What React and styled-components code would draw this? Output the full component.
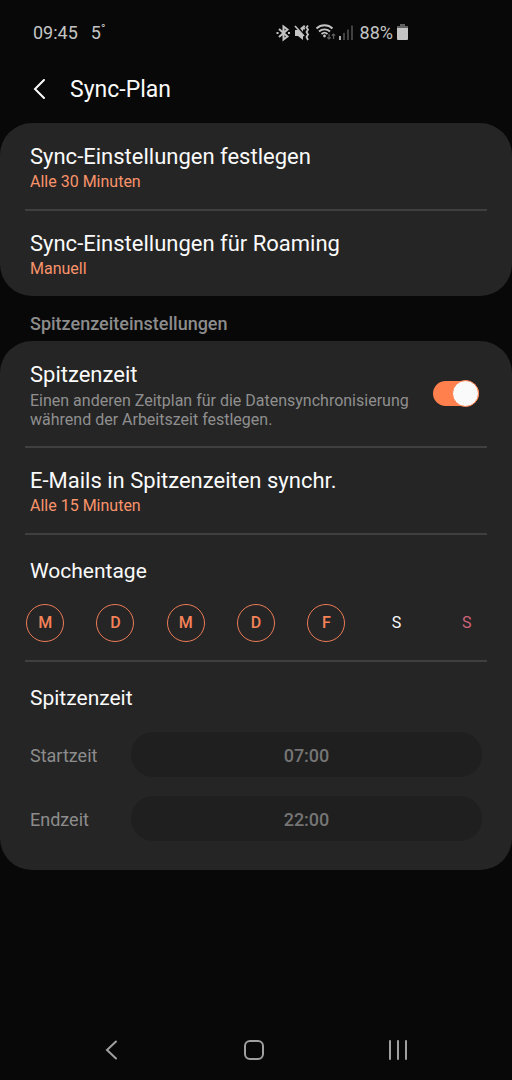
import React, { useState } from 'react';
import styled, { createGlobalStyle } from 'styled-components';

const GlobalStyle = createGlobalStyle`
  *, *::before, *::after {
    box-sizing: border-box;
  }

  body {
    margin: 0;
    background: #080808;
    font-family: Roboto, "Noto Sans", sans-serif;
  }

  button, input {
    font-family: inherit;
  }
`;

const Page = styled.div`
  display: flex;
  flex-direction: column;
  min-height: 100vh;
  color: #fafafa;
`;

const StatusBar = styled.div`
  display: flex;
  justify-content: space-between;
  padding: 22px 104px 10px 33px;
  color: #c4c4c4;
  font-size: 18px;
  line-height: 22px;
`;

const StatusGroup = styled.div`
  display: flex;
  align-items: center;
`;

const Temperature = styled.span`
  display: flex;
  align-items: flex-start;
  margin-left: 13px;
`;

const Degree = styled.span`
  font-size: 12px;
  line-height: 14px;
`;

const Battery = styled.span`
  display: flex;
  margin-left: 4px;
`;

const Header = styled.header`
  display: flex;
  align-items: center;
  gap: 21px;
  padding: 19px 30px 17px;
`;

const IconButton = styled.button`
  display: flex;
  padding: 0;
  border: 0;
  background: none;
  color: inherit;
`;

const PageTitle = styled.h1`
  margin: 0;
  font-size: 23px;
  font-weight: 400;
  line-height: 33px;
`;

const Card = styled.section`
  padding-top: 1px;
  border-radius: 32px;
  background: #252525;
`;

const Row = styled.div`
  display: flex;
  align-items: flex-start;
  justify-content: space-between;
  padding: 19px 33px 16px 30px;
`;

const Divider = styled.hr`
  height: 2px;
  margin: 0 25px;
  border: 0;
  background: #3f3f3f;
`;

const RowTitle = styled.div`
  font-size: 22px;
  line-height: 28px;
`;

const RowValue = styled.div`
  color: #f8936a;
  font-size: 16px;
  line-height: 22px;
`;

const RowDescription = styled.div`
  max-width: 390px;
  padding: 2px 0 1px;
  color: #8f8f8f;
  font-size: 16px;
  line-height: 19px;
`;

const SectionLabel = styled.h2`
  margin: 0;
  padding: 17px 30px 6px;
  color: #8c8c8c;
  font-size: 18px;
  font-weight: 500;
  line-height: 22px;
`;

const Switch = styled.input`
  display: flex;
  flex: none;
  align-items: center;
  justify-content: flex-end;
  width: 46px;
  height: 25px;
  margin: 20px 0 0;
  border-radius: 13px;
  appearance: none;
  background: #ff7f4d;

  &::before {
    content: "";
    flex: none;
    width: 27px;
    height: 27px;
    border: 1px solid #ff7f4d;
    border-radius: 50%;
    background: #fafafa;
  }

  &:not(:checked) {
    justify-content: flex-start;
    background: #5a5a5a;
  }
`;

const Block = styled.div`
  padding: 22px 0 ${({ $bottom }) => $bottom}px;
`;

const BlockTitle = styled.div`
  padding: 0 30px;
  font-size: 21px;
  line-height: 28px;
`;

const Days = styled.div`
  display: grid;
  grid-template-columns: repeat(7, 1fr);
  justify-items: center;
  padding: 19px 10px 0;
`;

const Day = styled.button`
  width: 38px;
  height: 38px;
  padding: 0;
  border: 1px solid ${({ $active }) => ($active ? '#ec7c56' : 'transparent')};
  border-radius: 50%;
  background: none;
  color: ${({ $active, $sunday }) => {
    if ($active) return '#f58259';
    return $sunday ? '#d0637a' : '#fafafa';
  }};
  font-size: 16px;
  font-weight: ${({ $active }) => ($active ? 500 : 400)};
  line-height: 34px;
`;

const Times = styled.div`
  display: grid;
  grid-template-columns: 101px 1fr;
  row-gap: 19px;
  align-items: center;
  padding: 20px 30px 0;
  color: #8c8c8c;
`;

const TimeLabel = styled.label`
  padding-top: 2px;
  font-size: 18px;
  line-height: 22px;
`;

const TimeInput = styled.input`
  width: 100%;
  height: 45px;
  padding: 2px 0 0;
  border: 0;
  border-radius: 23px;
  background: #1f1f1f;
  color: #757575;
  font-size: 18px;
  font-weight: 500;
  text-align: center;
`;

const NavBar = styled.nav`
  display: flex;
  align-items: center;
  justify-content: space-between;
  height: 60px;
  margin-top: auto;
  padding: 0 103px;
  color: #a0a0a0;
`;

const StatusIcons = () => (
  <svg width="84" height="22" viewBox="0 0 84 22" fill="none" stroke="currentColor" aria-hidden="true">
    {/* bluetooth */}
    <path d="M3 7l8.500 7.500L7.500 17.500V4.500L11.500 7.500L3 15" strokeWidth="2" />
    <path d="M.5 11h2M12 11h2" strokeWidth="2" />
    {/* muted speaker, vibration */}
    <path d="M19 8h3l5-4v14l-5-4h-3z" fill="currentColor" stroke="none" />
    <path d="M20 3l9 11" stroke="#080808" strokeWidth="2" />
    <path d="M19 4l9 10" strokeWidth="1.600" />
    <path d="M28.500 3.500l-1 2 1 2M32 3.500l-1.500 2 1.500 2-1.500 2.500L32 12.500l-1.500 2.500L32 18" strokeWidth="1.800" />
    {/* wifi with traffic arrows */}
    <path d="M40.500 6.500a11.500 11.500 0 0 1 16 0M43 9.500a8 8 0 0 1 11 0M45.500 12a4.500 4.500 0 0 1 6 0" strokeWidth="1.800" />
    <circle cx="48.500" cy="14" r="1.400" fill="currentColor" stroke="none" />
    <path d="M53 12v5M51.300 15.300L53 17l1.700-1.700M57.500 17v-5M55.800 13.700l1.700-1.700 1.700 1.700" stroke="#606060" strokeWidth="1.200" />
    {/* signal */}
    <path d="M64 14V18" strokeWidth="1.800" />
    <path d="M68 11v7M72 7.500V18M76 3.500V18" stroke="#505050" strokeWidth="1.600" />
  </svg>
);

const BatteryIcon = () => (
  <svg width="11" height="18" viewBox="0 0 11 18" aria-hidden="true">
    <path d="M3 2V0h5v2h3v3H0V2z" fill="#606060" />
    <path d="M0 4h11v11a1 1 0 0 1-1 1H1a1 1 0 0 1-1-1z" fill="currentColor" />
  </svg>
);

const SettingRow = ({ title, value }) => (
  <Row>
    <div>
      <RowTitle>{title}</RowTitle>
      <RowValue>{value}</RowValue>
    </div>
  </Row>
);

const WEEK = [
  { id: 'mo', name: 'Montag', letter: 'M' },
  { id: 'di', name: 'Dienstag', letter: 'D' },
  { id: 'mi', name: 'Mittwoch', letter: 'M' },
  { id: 'do', name: 'Donnerstag', letter: 'D' },
  { id: 'fr', name: 'Freitag', letter: 'F' },
  { id: 'sa', name: 'Samstag', letter: 'S' },
  { id: 'so', name: 'Sonntag', letter: 'S' },
];

const App = () => {
  const [peak, setPeak] = useState(true);
  const [days, setDays] = useState(['mo', 'di', 'mi', 'do', 'fr']);

  const toggleDay = (id) => {
    setDays(days.includes(id) ? days.filter((day) => day !== id) : [...days, id]);
  };

  return (
    <Page>
      <GlobalStyle />
      <StatusBar>
        <StatusGroup>
          <span>09:45</span>
          <Temperature>
            5
            <Degree>°</Degree>
          </Temperature>
        </StatusGroup>
        <StatusGroup>
          <StatusIcons />
          <span>88%</span>
          <Battery><BatteryIcon /></Battery>
        </StatusGroup>
      </StatusBar>

      <Header>
        <IconButton aria-label="Zurück">
          <svg width="19" height="22" viewBox="0 0 19 22" fill="none" stroke="currentColor" strokeWidth="2">
            <path d="M14 1L5 10l9 9" strokeLinecap="round" />
          </svg>
        </IconButton>
        <PageTitle>Sync-Plan</PageTitle>
      </Header>

      <Card>
        <SettingRow title="Sync-Einstellungen festlegen" value="Alle 30 Minuten" />
        <Divider />
        <SettingRow title="Sync-Einstellungen für Roaming" value="Manuell" />
      </Card>

      <SectionLabel>Spitzenzeiteinstellungen</SectionLabel>

      <Card>
        <Row>
          <label htmlFor="peak">
            <RowTitle>Spitzenzeit</RowTitle>
            <RowDescription>
              Einen anderen Zeitplan für die Datensynchronisierung während der Arbeitszeit festlegen.
            </RowDescription>
          </label>
          <Switch id="peak" type="checkbox" checked={peak} onChange={() => setPeak(!peak)} />
        </Row>
        <Divider />
        <SettingRow title="E-Mails in Spitzenzeiten synchr." value="Alle 15 Minuten" />
        <Divider />
        <Block $bottom={18}>
          <BlockTitle>Wochentage</BlockTitle>
          <Days>
            {WEEK.map(({ id, name, letter }) => (
              <Day
                key={id}
                aria-label={name}
                aria-pressed={days.includes(id)}
                $active={days.includes(id)}
                $sunday={id === 'so'}
                onClick={() => toggleDay(id)}
              >
                {letter}
              </Day>
            ))}
          </Days>
        </Block>
        <Divider />
        <Block $bottom={29}>
          <BlockTitle>Spitzenzeit</BlockTitle>
          <Times>
            <TimeLabel htmlFor="start">Startzeit</TimeLabel>
            <TimeInput id="start" type="text" defaultValue="07:00" disabled />
            <TimeLabel htmlFor="end">Endzeit</TimeLabel>
            <TimeInput id="end" type="text" defaultValue="22:00" disabled />
          </Times>
        </Block>
      </Card>

      <NavBar>
        <IconButton aria-label="Zurück">
          <svg width="18" height="22" viewBox="0 0 18 22" fill="none" stroke="currentColor" strokeWidth="2">
            <path d="M13 2.500L4 11l9 8.500" strokeLinecap="round" />
          </svg>
        </IconButton>
        <IconButton aria-label="Startseite">
          <svg width="22" height="22" viewBox="0 0 22 22" fill="none" stroke="currentColor" strokeWidth="2">
            <rect x="2" y="2" width="18" height="18" rx="5" />
          </svg>
        </IconButton>
        <IconButton aria-label="Letzte Apps">
          <svg width="22" height="22" viewBox="0 0 22 22" fill="none" stroke="currentColor" strokeWidth="2">
            <path d="M3 2v18M11 2v18M19 2v18" strokeLinecap="round" />
          </svg>
        </IconButton>
      </NavBar>
    </Page>
  );
};

export default App;
